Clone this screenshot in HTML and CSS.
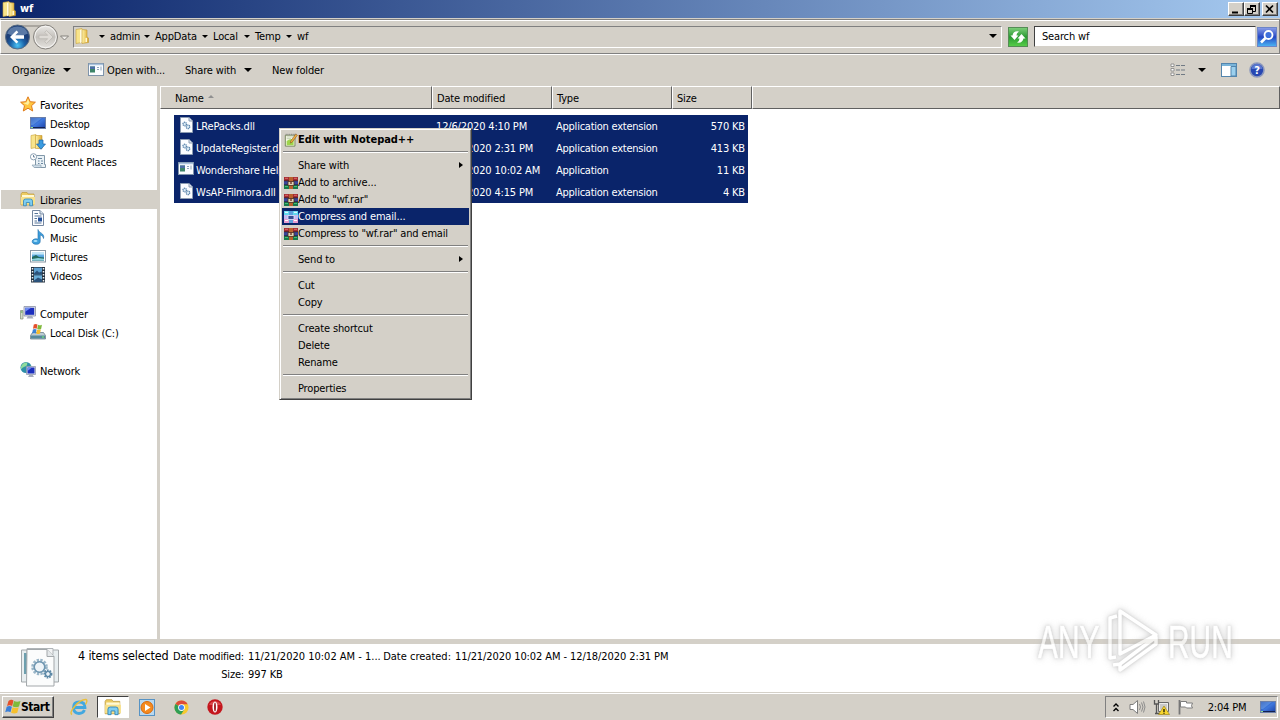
FILE: index.html
```
<!DOCTYPE html>
<html lang="en">
<head>
    <meta charset="UTF-8">
    <meta name="viewport" content="width=device-width, initial-scale=1.0">
    <title>wf</title>
    <link rel="stylesheet" href="styles.css">
</head>
<body>
    <!-- shared icons -->
    <svg class="defs" width="0" height="0">
        <defs>
            <linearGradient id="g-gold" x1="0" x2="1"><stop offset="0" stop-color="#fff3a8"/><stop offset="1" stop-color="#dca92f"/></linearGradient>
            <linearGradient id="g-blue" x1="0" x2="1" y2="1"><stop offset="0" stop-color="#17308c"/><stop offset=".5" stop-color="#3f78dd"/><stop offset="1" stop-color="#1b3fa5"/></linearGradient>
            <linearGradient id="g-sky" x2="0" y2="1"><stop offset="0" stop-color="#8fd0f5"/><stop offset="1" stop-color="#1e78c8"/></linearGradient>
            <radialGradient id="g-back" cy=".85"><stop offset="0" stop-color="#4cc4f5"/><stop offset=".6" stop-color="#1b62a8"/><stop offset="1" stop-color="#1d3f78"/></radialGradient>
            <linearGradient id="g-fwd" x2="0" y2="1"><stop offset="0" stop-color="#eceae7"/><stop offset=".5" stop-color="#c4c1bc"/><stop offset="1" stop-color="#e6e4e0"/></linearGradient>
            <linearGradient id="g-green" x2="0" y2="1"><stop offset="0" stop-color="#7fcf7b"/><stop offset=".5" stop-color="#2a9a32"/><stop offset="1" stop-color="#58cf4a"/></linearGradient>
            <linearGradient id="g-find" x2="0" y2="1"><stop offset="0" stop-color="#8c9fe8"/><stop offset=".5" stop-color="#2547c4"/><stop offset="1" stop-color="#4cb6f4"/></linearGradient>
        </defs>
        <symbol id="i-folder" viewBox="0 0 16 16">
            <path d="M2 1.500l6-1v14l-6 1z" fill="#f8e48c" stroke="#c9a23a" stroke-width=".6"/>
            <path d="M6 2l3-1v13l-3 1z" fill="#fffbe0"/>
            <path d="M8 1.500l5 .5v7l1.500 1v4.500l-6.500 1z" fill="url(#g-gold)" stroke="#c2972f" stroke-width=".6"/>
            <path d="M11.500 10h1.500v4h-1.500z" fill="#fff8d0"/>
        </symbol>
        <symbol id="i-star" viewBox="0 0 16 16">
            <path d="M8 .8l2.200 4.900 5.200.5-3.900 3.500 1.200 5.300L8 12.200 3.300 15l1.200-5.300L.6 6.200l5.200-.5z" fill="#ffc640" stroke="#e07b1c"/>
            <path d="M8 3l1.400 3.600L8 9 3 7l3.500-.6z" fill="#fff0a0"/>
        </symbol>
        <symbol id="i-screen" viewBox="0 0 16 16">
            <rect x=".5" y="2.500" width="15" height="11" fill="url(#g-blue)" stroke="#6b7fa8"/>
            <path d="M1 3h11L3 10H1z" fill="#6fa5ee" opacity=".55"/>
            <path d="M1 12.500h14" stroke="#132050"/><path d="M1 12.500h2" stroke="#8fe08c"/>
        </symbol>
        <symbol id="i-down" viewBox="0 0 16 16">
            <path d="M1 1.500l5-1v13l-5 1z" fill="#f8e48c" stroke="#c9a23a" stroke-width=".6"/>
            <path d="M5.500 1.500h6.500v13H5.500z" fill="url(#g-gold)" stroke="#c2972f" stroke-width=".6"/>
            <path d="M9 6h4v4h2.500L11 15.300 6.500 10H9z" fill="#3a9be0" stroke="#1a62a8" stroke-width=".7"/>
        </symbol>
        <symbol id="i-recent" viewBox="0 0 16 16">
            <path d="M5.500 2.500h9v9h1v3h-10l-2-1.500h2z" fill="#e9f1f6" stroke="#8197a8"/>
            <path d="M8 5.500h4M8 8h1.500M11 8h2M8 10.500h1.500M11 10.500h2" stroke="#6b87a0"/>
            <circle cx="3.500" cy="3.800" r="3.100" fill="#fff" stroke="#8ea2b4"/><path d="M3.500 2v2h1.500" stroke="#4c6b88" fill="none" stroke-width=".8"/>
            <path d="M2 12h9v2.500H4z" fill="#cfdde8" stroke="#8197a8" stroke-width=".6"/>
        </symbol>
        <symbol id="i-lib" viewBox="0 0 16 16">
            <path d="M1 3l1-1.500h5l1 1.500h6v11H1z" fill="#edcc62" stroke="#bd9a3d" stroke-width=".7"/>
            <path d="M2 4h12v3H2z" fill="#fff9d4"/><path d="M1 6h14v7.500H1z" fill="#f7e08a"/>
            <path d="M3.500 14.800V10q0-2 2-2h5q2 0 2 2v4.800h-2.800v-3.300H6.300v3.300z" fill="#7fcdf0" stroke="#2f83b8" stroke-width=".8"/>
        </symbol>
        <symbol id="i-doc" viewBox="0 0 16 16">
            <path d="M2.500.5H10L13.500 4v11.500h-11z" fill="#fcfdff" stroke="#7587a0"/><path d="M10 .5V4h3.500" fill="#dce6f0" stroke="#7587a0"/>
            <path d="M4.500 3.500H8M4.500 6h7M4.500 8.500H7M4.500 11H7M4.500 13h7" stroke="#577597"/><rect x="8" y="7.500" width="4" height="4" fill="#245099"/>
        </symbol>
        <symbol id="i-music" viewBox="0 0 16 16">
            <path d="M8 .5c.5 3.500 7 3.500 5.500 9-.3-2.500-2-3.200-3.300-3.500v6.500C10.200 16.500 2 16 2.200 12.500c.1-2.300 3-3.300 5.800-2.300z" fill="#3e9fdc" stroke="#1d6cab" stroke-width=".6"/>
            <ellipse cx="5.500" cy="12" rx="2" ry="1.100" fill="#a8e0fa"/>
        </symbol>
        <symbol id="i-pic" viewBox="0 0 16 16">
            <rect x=".5" y="2.500" width="15" height="11.500" fill="#fff" stroke="#8b98a4"/><rect x="2" y="4" width="12" height="8.500" fill="url(#g-sky)"/>
            <path d="M2 4h12v2.500H2z" fill="#c4e6f6"/>
            <path d="M2 9l4-2 3 2 5 .5v3H2z" fill="#226b60"/><path d="M2 11l6-1 6 .7V12.500H2z" fill="#8cd2dc"/>
        </symbol>
        <symbol id="i-video" viewBox="0 0 16 16">
            <rect x="1" y="0" width="14" height="15.500" fill="#23303e"/><rect x="4" y=".7" width="8" height="6.800" fill="#5c9fd0"/><rect x="4" y="8.300" width="8" height="6.700" fill="#69add8"/>
            <path d="M4 6.500l3-3 2 2 3-1v3H4zM4 13.500l4-3 4 2V15H4z" fill="#2b527b"/>
            <path d="M2.500 1v14M13.500 1v14" stroke="#f0f4f6" stroke-width="1.500" stroke-dasharray="1.500 1.500"/>
        </symbol>
        <symbol id="i-pc" viewBox="0 0 16 16">
            <path d="M.5 5.500h2.500v8.500H.5z" fill="#d3dbc8" stroke="#7e8b76" stroke-width=".7"/><path d="M1 7h1.500" stroke="#47a63e"/>
            <path d="M4 1.500h11.500v9.500H4z" fill="#dce0ea" stroke="#8990a5" stroke-width=".8"/><path d="M5.200 2.800h9v7h-9z" fill="#1c2fbe"/><path d="M5.200 2.800h6l-6 4z" fill="#6f8cf0"/>
            <path d="M8 11h4l1.500 2.500H6.500z" fill="#a7adbd"/>
        </symbol>
        <symbol id="i-disk" viewBox="0 0 16 16">
            <path d="M2.500 8.500H13.500l2 3v3.500H.5v-3.500z" fill="#bccbd2" stroke="#5c7480" stroke-width=".7"/><path d="M1 11.500h14v3H1z" fill="#54899c"/><path d="M12 13h2" stroke="#7bf46c"/>
            <path d="M3.800.5q2-1 3.700 0l-.8 4.300q-1.700-1-3.700 0z" fill="#e5502c"/><path d="M8 .8q2 1 4 0l-.9 4.300q-2 1-3.900 0z" fill="#7fb93c"/>
            <path d="M2.900 5.400q2-1 3.700 0l-.8 4q-1.700-1-3.700 0z" fill="#3a83d6"/><path d="M7 5.600q2 1 3.900 0L10 9.600q-2 1-3.800 0z" fill="#f4bb30"/>
        </symbol>
        <symbol id="i-net" viewBox="0 0 16 16">
            <circle cx="6" cy="5.500" r="5.500" fill="#2e8fa8"/><path d="M1 4.500q2-4.500 6-4 1 3-2 4T1 7.500zM7 6.500l4-3v5z" fill="#8fdc9c"/>
            <path d="M6.500 4.500h9v8h-9z" fill="#dfe2ec" stroke="#888fa6" stroke-width=".7"/><path d="M7.500 5.500h7v6h-7z" fill="#1c2fbe"/><path d="M7.500 5.500h4.500l-4.500 3.500z" fill="#6f8cf0"/>
            <path d="M9.500 12.500h3l1.500 2.500H8z" fill="#a7adbd"/>
        </symbol>
        <symbol id="i-app" viewBox="0 0 16 16">
            <rect x=".5" y="1.500" width="15" height="12" fill="#fbfdff" stroke="#7f94ab"/><path d="M1 2.500h14" stroke="#a9c3dc" stroke-width="1.500"/>
            <rect x="2" y="4.500" width="5" height="6" fill="#3d8468"/><path d="M2 4.500h5V7H2z" fill="#4c6ea6"/><path d="M9 5.500h2M9 7.500h2M13 4.500v4" stroke="#8fa5ba"/>
        </symbol>
        <symbol id="i-dll" viewBox="0 0 16 16">
            <path d="M2.500.5H11L14.500 4v11.500h-12z" fill="#fcfdff" stroke="#8c9cb2"/><path d="M11 .5V4h3.500" fill="#dde5ee" stroke="#8c9cb2"/>
            <circle cx="6.700" cy="7" r="1.800" fill="#dcebf5" stroke="#557fa8" stroke-width="1.200" stroke-dasharray="1.200 .5"/><circle cx="10" cy="9.800" r="1.800" fill="#dcebf5" stroke="#557fa8" stroke-width="1.200" stroke-dasharray="1.200 .5"/>
        </symbol>
        <symbol id="i-rar" viewBox="0 0 14 14">
            <path d="M0 1h14v4H0z" fill="#a22c35"/><path d="M0 5h14v4H0z" fill="#39469b"/><path d="M0 9h14v4H0z" fill="#18794a"/>
            <path d="M0 4.800h14M0 8.800h14" stroke="#241c22" stroke-width=".7"/>
            <path d="M5 1h4v12H5z" fill="#b9602c"/><path d="M4 5.500h6v4H4z" fill="#ddd2b4" stroke="#4a2e1e" stroke-width=".8"/><path d="M7 5v3" stroke="#6e3526" stroke-width="1.400"/>
            <path d="M1 2.300h3M10 2.300h3" stroke="#e26f66"/><path d="M1 10.500h3M10 10.500h3" stroke="#44bf76"/>
        </symbol>
        <symbol id="i-rar-hot" viewBox="0 0 14 14">
            <path d="M0 1h14v4H0z" fill="#62d8ee"/><path d="M0 5h14v4H0z" fill="#c3b9f0"/><path d="M0 9h14v4H0z" fill="#e79dd0"/>
            <path d="M5 1h4v12H5z" fill="#5ba0dc"/><path d="M4 5.500h6v4H4z" fill="#354b91" stroke="#e4e8ff" stroke-width=".8"/><path d="M1 2.300h3M10 2.300h3M1 10.500h3M10 10.500h3" stroke="#fff"/>
        </symbol>
        <symbol id="i-npp" viewBox="0 0 16 16">
            <path d="M1.500 2.500h11v12.500h-11z" fill="#f7fbe8" stroke="#6b7a51"/><path d="M3 9q4-3 8-2v7H3z" fill="#9fd54c"/><path d="M3 4.500h8M3 6.500h5" stroke="#b9c6ab"/>
            <path d="M2 1.500h11" stroke="#777" stroke-dasharray="1 1"/><path d="M13.500 1l1.800 1.500-6 8-2 1 .3-2.200z" fill="#f2b040" stroke="#7d4a1c" stroke-width=".6"/>
        </symbol>
        <symbol id="i-flag-win" viewBox="0 0 16 16">
            <path d="M3.500 2q2.500-2 5-.5L7.200 7Q4.700 5.500 2 7z" fill="#e4502a"/><path d="M9 2q3 1.500 6.500 0l-1.500 5.500q-3 1.500-6.300 0z" fill="#7fba3a"/>
            <path d="M1.700 7.800q2.700-1.500 5.200 0l-1.400 5.500q-2.500-1.500-5.300 0z" fill="#3a7fd8"/><path d="M7.500 8.300q3 1.500 6.200 0l-1.400 5.500q-3 1.500-6.200 0z" fill="#f6c02e"/>
        </symbol>
    </svg>

    <div class="window">
        <div class="titlebar">
            <svg class="icon"><use href="#i-folder"/></svg>
            <span class="title">wf</span>
            <div class="controls">
                <button><svg width="13" height="11"><path d="M3 8.500h6" stroke="#000" stroke-width="2"/></svg></button>
                <button><svg width="13" height="11"><path d="M5 1h6v2H5zM2 4h6v2H2z"/><path d="M5.500 3v1M10.500 3v4.500H8M2.500 5.500v4h5v-4" fill="none" stroke="#000"/></svg></button>
                <button class="close"><svg width="13" height="11"><path d="M3 1.500l7 7M10 1.500l-7 7" stroke="#000" stroke-width="1.700"/></svg></button>
            </div>
        </div>

        <div class="navbar">
            <svg class="nav-buttons" width="72" height="30" viewBox="0 0 72 30">
                <path d="M16 4h28" stroke="#aaa69f" stroke-width="2"/>
                <circle cx="17.500" cy="15" r="12" fill="url(#g-back)" stroke="#5a6d83"/>
                <path d="M7 11.500a11 10 0 0 1 21 0q-10 5-21 0z" fill="#b7d3ea" opacity=".4"/>
                <path d="M16.500 8.500L10 15l6.500 6.500 1.800-1.800-3-3H24v-3.400h-8.700l3-3z" fill="#fff"/>
                <circle cx="45.500" cy="15" r="12" fill="url(#g-fwd)" stroke="#85827d"/><circle cx="45.500" cy="15" r="10.700" fill="none" stroke="#f6f5f3"/>
                <path d="M46.500 8.500L53 15l-6.500 6.500-1.800-1.800 3-3H39v-3.400h8.700l-3-3z" fill="#dedbd6" stroke="#b9b6b0" stroke-width=".7"/>
                <path d="M60.500 14h8l-4 4z" fill="#f0eeea" stroke="#85827d"/>
            </svg>
            <div class="address">
                <svg class="icon"><use href="#i-folder"/></svg>
                <i class="arrow first"></i><span class="crumb c-admin">admin</span>
                <i class="arrow"></i><span class="crumb c-appdata">AppData</span>
                <i class="arrow"></i><span class="crumb">Local</span>
                <i class="arrow"></i><span class="crumb">Temp</span>
                <i class="arrow"></i><span class="crumb">wf</span>
                <i class="arrow big drop"></i>
            </div>
            <svg class="refresh" width="20" height="20" viewBox="0 0 20 20">
                <rect x=".5" y=".5" width="19" height="19" fill="url(#g-green)" stroke="#558c55"/>
                <path d="M4.500 9.500H2.500L6.500 14l4-4.500H8.500Q8.500 7 11 5.500 5.500 4.500 4.500 9.500z" fill="#fff" transform="translate(0 -1)"/>
                <path d="M15.500 10.500h2L13.500 6l-4 4.500h2Q11.500 13 9 14.500q5.500 1 6.500-4z" fill="#fff" transform="translate(0 1)"/>
            </svg>
            <div class="search">Search wf</div>
            <svg class="find" width="20" height="20" viewBox="0 0 20 20">
                <rect x=".5" y=".5" width="19" height="19" fill="url(#g-find)" stroke="#6d85c6"/>
                <path d="M4 15.500l4.500-4.500" stroke="#fff" stroke-width="2.600"/><circle cx="11.500" cy="8" r="4" fill="#3f70dc" stroke="#fff" stroke-width="1.800"/>
            </svg>
        </div>

        <div class="toolbar">
            <span class="t-organize">Organize</span><i class="arrow big"></i>
            <svg class="icon"><use href="#i-app"/></svg><span class="t-open">Open with...</span>
            <span class="t-share">Share with</span><i class="arrow big"></i>
            <span class="t-new">New folder</span>
            <div class="toolbar-right">
                <svg width="16" height="14"><path d="M1 1h3v2.500H1zM1 5.500h3V8H1zM1 10h3v2.500H1z" fill="#fff" stroke="#808080" stroke-width=".8"/><path d="M6 2.500h4M11 2.500h4M6 7h4M11 7h4M6 11.500h4M11 11.500h4" stroke="#707a84"/></svg>
                <i class="arrow big"></i>
                <svg class="preview" width="16" height="14"><rect x=".5" y=".5" width="15" height="13" fill="#fff" stroke="#5385ad"/><path d="M1 2h14" stroke="#79b4d9" stroke-width="2"/><path d="M10 3.500h5V13h-5z" fill="#9bd0ee" stroke="#5385ad"/></svg>
                <svg width="16" height="16"><circle cx="8" cy="8" r="7" fill="#2747b2" stroke="#8d99bd" stroke-width="1.600"/><path d="M2.500 7a5.500 5 0 0 1 11 0z" fill="#7d98e2" opacity=".6"/><text x="8" y="12" text-anchor="middle" class="help">?</text></svg>
            </div>
        </div>

        <div class="main">
            <div class="sidebar">
                <div class="node top"><svg class="icon"><use href="#i-star"/></svg>Favorites</div>
                <div class="node"><svg class="icon"><use href="#i-screen"/></svg>Desktop</div>
                <div class="node"><svg class="icon"><use href="#i-down"/></svg>Downloads</div>
                <div class="node"><svg class="icon"><use href="#i-recent"/></svg>Recent Places</div>
                <div class="node top gap selected"><svg class="icon"><use href="#i-lib"/></svg>Libraries</div>
                <div class="node"><svg class="icon"><use href="#i-doc"/></svg>Documents</div>
                <div class="node"><svg class="icon"><use href="#i-music"/></svg>Music</div>
                <div class="node"><svg class="icon"><use href="#i-pic"/></svg>Pictures</div>
                <div class="node"><svg class="icon"><use href="#i-video"/></svg>Videos</div>
                <div class="node top gap"><svg class="icon"><use href="#i-pc"/></svg>Computer</div>
                <div class="node"><svg class="icon"><use href="#i-disk"/></svg>Local Disk (C:)</div>
                <div class="node top gap"><svg class="icon"><use href="#i-net"/></svg>Network</div>
            </div>

            <div class="content">
                <div class="headers">
                    <div class="th name">Name <i class="sort"></i></div>
                    <div class="th">Date modified</div>
                    <div class="th">Type</div>
                    <div class="th size">Size</div>
                    <div class="th rest"></div>
                </div>
                <div class="files">
                    <div class="file"><svg class="icon"><use href="#i-dll"/></svg><span>LRePacks.dll</span><span>12/6/2020 4:10 PM</span><span class="type">Application extension</span><span class="kb">570 KB</span></div>
                    <div class="file"><svg class="icon"><use href="#i-dll"/></svg><span>UpdateRegister.dll</span><span>12/18/2020 2:31 PM</span><span class="type">Application extension</span><span class="kb">413 KB</span></div>
                    <div class="file"><svg class="icon"><use href="#i-app"/></svg><span>Wondershare Helper</span><span>11/21/2020 10:02 AM</span><span class="type">Application</span><span class="kb">11 KB</span></div>
                    <div class="file"><svg class="icon"><use href="#i-dll"/></svg><span>WsAP-Filmora.dll</span><span>12/13/2020 4:15 PM</span><span class="type">Application extension</span><span class="kb">4 KB</span></div>
                </div>
            </div>
        </div>

        <div class="details">
            <svg class="thumb" width="40" height="40" viewBox="0 0 40 40">
                <path d="M1.500 3h8v32h-8zM30 3h8.500v32H30z" fill="#e8eef0" stroke="#a3a8ab"/><path d="M4 6h3.500v21H4z" fill="#6d9fae"/><path d="M7 1.500h26v6H7z" fill="#f3f4f5" stroke="#b0b5b8"/>
                <path d="M7 2.500h20l7 7V39H6.500z" fill="#fbfcfc" stroke="#a3a8ab"/><path d="M27 2.500v7h7" fill="#e4e8ea" stroke="#a3a8ab"/>
                <circle cx="19.500" cy="20" r="6.500" fill="#eef4f8" stroke="#9ab6c8" stroke-width="3.600" stroke-dasharray="2.200 1.200"/><circle cx="19.500" cy="20" r="5.300" fill="none" stroke="#6f96b0" stroke-width="1.600"/>
                <circle cx="28" cy="27" r="3.200" fill="#eef4f8" stroke="#5c88a6" stroke-width="2.600" stroke-dasharray="1.500 .8"/><circle cx="28" cy="27" r="2.500" fill="none" stroke="#5c88a6" stroke-width="1.200"/>
            </svg>
            <div class="count">4 items selected</div>
            <div class="props">
                <span class="label">Date modified:</span><span class="val range">11/21/2020 10:02 AM - 1...</span><span class="label created">Date created:</span><span class="val">11/21/2020 10:02 AM - 12/18/2020 2:31 PM</span>
                <span class="label">Size:</span><span class="val">997 KB</span>
            </div>
        </div>

        <div class="taskbar">
            <div class="start"><svg class="icon"><use href="#i-flag-win"/></svg><span>Start</span></div>
            <div class="task"><svg width="18" height="18" viewBox="0 0 18 18"><path d="M14.500 12q-1.500 3.500-5.500 3.500-5.500-.5-5.500-6 0-5.500 5.700-5.500 5.800 0 5.800 5.500H5" fill="none" stroke="#42a8e0" stroke-width="2.800"/><path d="M2 16.500Q-1 15 5 8t11-6.500q2 1-.5 5" fill="none" stroke="#eabf3a" stroke-width="1.400"/></svg></div>
            <div class="task active"><svg width="18" height="18"><use href="#i-lib"/></svg></div>
            <div class="task"><svg width="16" height="17" viewBox="0 0 16 17"><rect x=".5" y=".5" width="15" height="16" fill="#b9d8ef" stroke="#5793c4"/><circle cx="8" cy="8.500" r="6" fill="#f58a1e" stroke="#d8690c"/><path d="M6 5l5.500 3.500L6 12z" fill="#fff"/></svg></div>
            <div class="task"><svg width="15" height="15" viewBox="0 0 16 16"><circle cx="8" cy="8" r="7.500" fill="#f7c92e"/><path d="M8 8L1.500 4.200A7.500 7.500 0 0 1 14.500 4.500H8z" fill="#dd4b3a"/><path d="M8 8L1.500 4.200A7.500 7.500 0 0 0 7.500 15.500L11 10z" fill="#2f9e55"/><circle cx="8" cy="8" r="3.600" fill="#fff"/><circle cx="8" cy="8" r="2.700" fill="#4285f4"/></svg></div>
            <div class="task"><svg width="16" height="16" viewBox="0 0 16 16"><circle cx="8" cy="8" r="7.700" fill="#c4161d"/><path d="M2 6a6.500 6 0 0 1 12 0z" fill="#e86c6c" opacity=".6"/><ellipse cx="8" cy="8" rx="2.500" ry="5.600" fill="#fff"/><ellipse cx="8" cy="8" rx=".9" ry="4.500" fill="#961015"/></svg></div>
            <div class="tray">
                <svg width="9" height="11"><path d="M1.500 4.500l2.500-2.500 2.500 2.500M1.500 9l2.500-2.500L6.500 9" fill="none" stroke="#000" stroke-width="1.400"/></svg>
                <svg class="vol" width="17" height="16"><path d="M1 5.500h3L8.500 1.500v13L4 10.500H1z" fill="#fff" stroke="#7d7d7d"/><path d="M10.500 5q2 3 0 6M12.500 3.500q3 4.500 0 9M14.500 2.500q3 5.500 0 11" fill="none" stroke="#8c8c8c"/></svg>
                <svg class="lan" width="17" height="16"><path d="M5.500 3.500h10v9h-10z" fill="#ececec" stroke="#686868"/><path d="M7 5h7v5.500H7z" fill="#c9c9c9"/><path d="M1.500 1v4h4V1M3.500 5v10M2 14.500h8" fill="none" stroke="#555" stroke-width="1.300"/><path d="M11 7l5.500 8.500h-11z" fill="#f7d52c" stroke="#a1861b" stroke-width=".7"/><path d="M11 10v3M11 13.700v1" stroke="#000" stroke-width="1.200"/></svg>
                <svg class="act" width="17" height="16"><path d="M2.500 1v14.500" stroke="#777" stroke-width="1.800"/><path d="M3.500 2.500h6v1.500h6q-2 3 0 5h-6l-1-1h-5z" fill="#fff" stroke="#7d7d7d"/></svg>
                <span class="clock">2:04 PM</span>
                <svg class="icon"><use href="#i-screen"/></svg>
            </div>
        </div>
    </div>

    <div class="menu">
        <div class="item default"><svg class="m-icon"><use href="#i-npp"/></svg><span>Edit with Notepad++</span></div>
        <hr>
        <div class="item"><span>Share with</span><i class="sub"></i></div>
        <div class="item"><svg class="m-icon"><use href="#i-rar"/></svg><span>Add to archive...</span></div>
        <div class="item"><svg class="m-icon"><use href="#i-rar"/></svg><span>Add to "wf.rar"</span></div>
        <div class="item hot"><svg class="m-icon"><use href="#i-rar-hot"/></svg><span>Compress and email...</span></div>
        <div class="item"><svg class="m-icon"><use href="#i-rar"/></svg><span>Compress to "wf.rar" and email</span></div>
        <hr>
        <div class="item"><span>Send to</span><i class="sub"></i></div>
        <hr>
        <div class="item"><span>Cut</span></div>
        <div class="item"><span>Copy</span></div>
        <hr>
        <div class="item"><span>Create shortcut</span></div>
        <div class="item"><span>Delete</span></div>
        <div class="item"><span>Rename</span></div>
        <hr>
        <div class="item"><span>Properties</span></div>
    </div>

    <div class="watermark">
        <span class="any">ANY</span>
        <svg width="56" height="64" viewBox="0 0 56 64"><path d="M11 8L4 10v40l6-1M14 3l36 24-36 19zM14 56v6l36-26v-7L14 56l-7 1" fill="none" stroke="#fff" stroke-width="3.500" stroke-linejoin="round"/></svg>
        <span class="run">RUN</span>
    </div>
</body>
</html>
```
FILE: styles.css
```
* {
    box-sizing: border-box;
}
body {
    margin: 0;
    width: 1280px;
    height: 720px;
    overflow: hidden;
    position: relative;
    font-family: "DejaVu Sans Condensed", "DejaVu Sans", sans-serif;
    font-stretch: condensed;
    font-size: 11px;
    letter-spacing: -0.16px;
    color: #000;
    background: #d4d0c8;
    white-space: nowrap;
}
.defs {
    position: absolute;
}
svg {
    flex: none;
    display: block;
}
.icon {
    width: 16px;
    height: 16px;
}
.window {
    display: flex;
    flex-direction: column;
    height: 720px;
}

/* title bar */
.titlebar {
    height: 18px;
    flex: none;
    display: flex;
    align-items: center;
    padding: 0 2px 0 1px;
    background: linear-gradient(90deg, #0a246a, #a6caf0);
}
.title {
    margin: 0 0 1px 3px;
    color: #fff;
    font-weight: bold;
}
.controls {
    display: flex;
    margin-left: auto;
}
.controls button {
    width: 16px;
    height: 14px;
    padding: 0;
    background: #d4d0c8;
    border: 1px solid;
    border-color: #fff #404040 #404040 #fff;
    box-shadow: inset -1px -1px #808080;
}
.controls .close {
    margin-left: 2px;
}

/* address row */
.navbar {
    height: 35px;
    flex: none;
    display: flex;
    align-items: center;
    padding-left: 1px;
    border: 1px solid #808080;
    border-left-color: #fff;
    box-shadow: inset 0 1px #fff;
    margin-top: 1px;
}
.nav-buttons {
    margin-left: -2px;
}
.address {
    width: 929px;
    height: 22px;
    margin-left: 1px;
    display: flex;
    align-items: center;
    padding-bottom: 1px;
    border: 1px solid;
    border-color: #808080 #fff #fff #808080;
}
.crumb {
    flex: none;
    width: 25px;
}
.c-admin {
    width: 28px;
}
.c-appdata {
    width: 41px;
}
.arrow {
    flex: none;
    border: 3px solid transparent;
    border-top-color: #000;
    border-bottom: 0;
    margin: 0 5px 0 6px;
    height: 3px;
}
.arrow.first {
    margin-left: 9px;
}
.arrow.big {
    border-width: 4px 4px 0;
    height: 4px;
}
.arrow.drop {
    margin: 0 4px 0 auto;
}
.refresh {
    margin-left: 6px;
}
.search {
    width: 222px;
    height: 21px;
    margin-left: 6px;
    padding-left: 7px;
    line-height: 19px;
    background: #fff;
    border: 1px solid;
    border-color: #404040 #d4d0c8 #d4d0c8 #404040;
}
.find {
    margin-left: 1px;
}

/* command bar */
.toolbar {
    height: 32px;
    flex: none;
    display: flex;
    align-items: center;
    padding: 0 15px 1px 12px;
    border-top: 1px solid #fff;
}
.t-organize {
    width: 45px;
}
.toolbar .icon {
    margin: 0 3px 0 12px;
}
.t-open {
    width: 78px;
}
.t-share {
    width: 53px;
}
.t-new {
    margin-left: 15px;
}
.toolbar-right {
    margin-left: auto;
    display: flex;
    align-items: center;
}
.toolbar-right .arrow {
    margin: 0 15px 0 12px;
}
.toolbar-right .preview {
    margin-right: 12px;
}
.help {
    fill: #fff;
    font-size: 11px;
    font-weight: bold;
}

/* tree */
.main {
    flex: 1;
    display: flex;
    background: #fff;
}
.sidebar {
    width: 160px;
    padding: 9px 0 0 1px;
    border-right: 3px solid #d4d0c8;
}
.node {
    height: 19px;
    display: flex;
    align-items: center;
    padding: 1px 0 0 29px;
}
.node.top {
    padding-left: 19px;
}
.node.gap {
    margin-top: 19px;
}
.node .icon {
    margin: -2px 4px 0 0;
}
.node.selected {
    background: #d4d0c8;
}

/* file list */
.content {
    flex: 1;
}
.headers {
    display: flex;
    height: 23px;
}
.th {
    width: 120px;
    padding: 1px 0 0 4px;
    line-height: 21px;
    background: #d4d0c8;
    border: 1px solid;
    border-color: #fff #606060 #606060 #fff;
}
.th.name {
    width: 272px;
    padding-left: 14px;
}
.th.size {
    width: 80px;
}
.th.rest {
    flex: 1;
}
.sort {
    display: inline-block;
    border: 3px solid transparent;
    border-top: 0;
    border-bottom-color: #909090;
    margin: 0 0 4px 1px;
}
.files {
    width: 574px;
    margin: 6px 0 0 14px;
}
.file {
    height: 22px;
    display: grid;
    grid-template-columns: 18px 240px 120px 120px 1fr;
    align-items: center;
    padding: 0 3px 0 4px;
    color: #fff;
    background: #0a246a;
}
.file .icon {
    margin-top: -2px;
}
.file .type {
    letter-spacing: -0.24px;
}
.file .kb {
    text-align: right;
}

/* details pane */
.details {
    height: 53px;
    flex: none;
    display: flex;
    padding-left: 20px;
    background: #fff;
    border-top: 5px solid #d4d0c8;
}
.thumb {
    margin-top: 3px;
}
.count {
    width: 96px;
    margin-left: 18px;
    font-size: 12.5px;
    line-height: 24px;
}
.props {
    display: grid;
    grid-template-columns: 70px 140px 67px auto;
    grid-template-rows: 18px 18px;
    margin-top: 4px;
    line-height: 18px;
    align-content: start;
    letter-spacing: -0.09px;
}
.label {
    text-align: right;
    margin-left: -10px;
    letter-spacing: -0.18px;
}
.label.created {
    letter-spacing: 0;
}
.val {
    padding-left: 4px;
}
.val.range {
    letter-spacing: 0;
}

/* taskbar */
.taskbar {
    height: 28px;
    flex: none;
    display: flex;
    align-items: center;
    padding: 1px 2px 0;
    border-top: 1px solid #d4d0c8;
    box-shadow: inset 0 1px #fff;
}
.start {
    width: 52px;
    height: 22px;
    margin-right: 9px;
    display: flex;
    align-items: center;
    padding-left: 2px;
    font-size: 12px;
    font-weight: bold;
    letter-spacing: -0.45px;
    border: 1px solid;
    border-color: #fff #404040 #404040 #fff;
    box-shadow: inset -1px -1px #808080;
}
.task {
    width: 32px;
    height: 22px;
    margin-right: 2px;
    display: flex;
    align-items: center;
    justify-content: center;
}
.task.active {
    background: #fff;
    border: 1px solid;
    border-color: #404040 #fff #fff #404040;
}
.tray {
    width: 173px;
    height: 22px;
    margin-left: auto;
    display: flex;
    align-items: center;
    padding-left: 6px;
    border: 1px solid;
    border-color: #808080 #fff #fff #808080;
}
.vol {
    margin-left: 8px;
}
.lan,
.act {
    margin-left: 7px;
}
.clock {
    margin: 0 auto;
}
.tray .icon {
    margin-right: 1px;
}

/* context menu */
.menu {
    position: absolute;
    left: 279px;
    top: 128px;
    width: 193px;
    height: 272px;
    padding: 2px;
    background: #d4d0c8;
    border: 1px solid;
    border-color: #d4d0c8 #404040 #404040 #d4d0c8;
    box-shadow: inset 1px 1px #fff, inset -1px -1px #808080;
}
.menu hr {
    height: 2px;
    margin: 3px 1px 4px;
    border: 0;
    border-top: 1px solid #808080;
    border-bottom: 1px solid #fff;
}
.item {
    height: 17px;
    display: flex;
    align-items: center;
    padding-left: 2px;
}
.item span {
    margin-left: auto;
    width: 171px;
}
.item.default {
    font-weight: bold;
    letter-spacing: -0.04px;
}
.item.hot {
    color: #fff;
    background: #0a246a;
}
.m-icon {
    width: 14px;
    height: 14px;
}
.sub {
    width: 0;
    margin: -1px 6px 0 -10px;
    border: 3px solid transparent;
    border-left: 4px solid #000;
    border-right: 0;
}

/* overlay logo */
.watermark {
    position: absolute;
    left: 1038px;
    top: 608px;
    display: flex;
    align-items: center;
    opacity: 0.7;
    color: #fff;
    font-family: "Liberation Sans", sans-serif;
    font-size: 46px;
    letter-spacing: 0;
    filter: drop-shadow(0 0 1px #bbb) drop-shadow(0 0 3px #bbb);
}
.any,
.run {
    display: block;
    width: 64px;
    margin-top: 4px;
    transform: scaleX(0.65);
    transform-origin: left;
    -webkit-text-stroke: 0.6px #fff;
}
.watermark svg {
    margin: 0 6px 0 4px;
}
```
